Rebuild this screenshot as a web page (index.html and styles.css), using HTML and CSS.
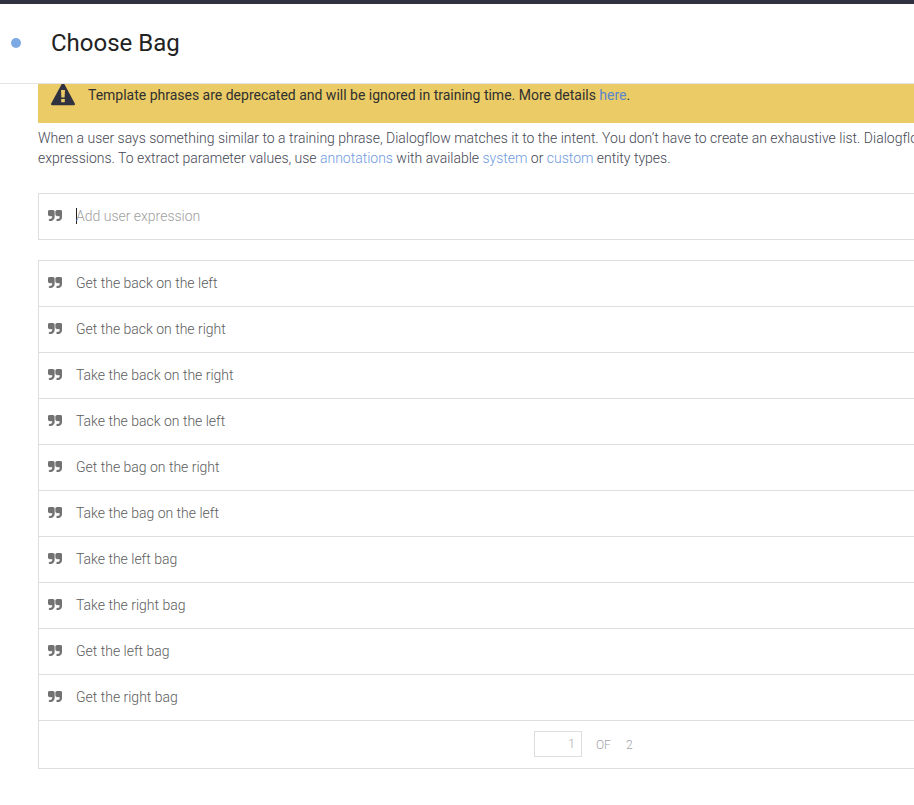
FILE: index.html
```html
<!DOCTYPE html>
<html lang="en">
<head>
<meta charset="utf-8">
<title>Choose Bag</title>
<link rel="stylesheet" href="styles.css">
</head>
<body>
<svg class="defs" aria-hidden="true">
  <symbol id="quote" viewBox="0 128 1664 1408" preserveAspectRatio="none"><path d="M768 320v704q0 104-40.5 198.5t-109.5 163.5-163.5 109.5-198.5 40.5h-64q-26 0-45-19t-19-45v-128q0-26 19-45t45-19h64q106 0 181-75t75-181v-32q0-40-28-68t-68-28h-224q-80 0-136-56t-56-136v-384q0-80 56-136t136-56h384q80 0 136 56t56 136zM1664 320v704q0 104-40.5 198.5t-109.5 163.5-163.5 109.5-198.5 40.5h-64q-26 0-45-19t-19-45v-128q0-26 19-45t45-19h64q106 0 181-75t75-181v-32q0-40-28-68t-68-28h-224q-80 0-136-56t-56-136v-384q0-80 56-136t136-56h384q80 0 136 56t56 136z"/></symbol>
</svg>
<header class="header">
  <span class="dot"></span>
  <h1 class="title">Choose Bag</h1>
</header>
<main class="content">
  <div class="banner">
    <svg class="warning" viewBox="0 0 24 22"><path fill-rule="evenodd" d="M10.7 0h2.6L23.7 19.2Q24.7 21.3 22.5 21.3H1.5Q-.7 21.3.3 19.2ZM10 6l.4 7.5h3.2l.4-7.5ZM10.2 15v3.3h3.6v-3.3Z"/></svg>
    <p class="banner-text">Template phrases are deprecated and will be ignored in training time. More details <a class="link">here</a>.</p>
  </div>
  <p class="intro">When a user says something similar to a training phrase, Dialogflow matches it to the intent. You don’t have to create an exhaustive list. Dialogflow<br>expressions. To extract parameter values, use <a class="link">annotations</a> with available <a class="link">system</a> or <a class="link">custom</a> entity types.</p>
  <div class="box entry row"><svg class="quote"><use href="#quote"/></svg><span class="caret"></span><span class="placeholder">Add user expression</span></div>
  <div class="box">
    <div class="row"><svg class="quote"><use href="#quote"/></svg><span>Get the back on the left</span></div>
    <div class="row"><svg class="quote"><use href="#quote"/></svg><span>Get the back on the right</span></div>
    <div class="row"><svg class="quote"><use href="#quote"/></svg><span>Take the back on the right</span></div>
    <div class="row"><svg class="quote"><use href="#quote"/></svg><span>Take the back on the left</span></div>
    <div class="row"><svg class="quote"><use href="#quote"/></svg><span>Get the bag on the right</span></div>
    <div class="row"><svg class="quote"><use href="#quote"/></svg><span>Take the bag on the left</span></div>
    <div class="row"><svg class="quote"><use href="#quote"/></svg><span>Take the left bag</span></div>
    <div class="row"><svg class="quote"><use href="#quote"/></svg><span>Take the right bag</span></div>
    <div class="row"><svg class="quote"><use href="#quote"/></svg><span>Get the left bag</span></div>
    <div class="row"><svg class="quote"><use href="#quote"/></svg><span>Get the right bag</span></div>
    <div class="pager"><span class="page">1</span><span class="of">OF</span><span class="total">2</span></div>
  </div>
</main>
</body>
</html>
```
FILE: styles.css
```css
* { box-sizing: border-box; }
body {
  margin: 0;
  height: 805px;
  overflow: hidden;
  background: #fff;
  color: #454754;
  font: 300 14px/20px Roboto, sans-serif;
  letter-spacing: -0.007px;
}
.defs { display: none; }
.header {
  display: flex;
  align-items: center;
  height: 84px;
  padding: 0 0 2px 11px;
  border-top: 4px solid #303240;
  border-bottom: 1px solid #e2e3e5;
}
.dot { width: 10px; height: 10px; border-radius: 50%; background: #7eaae4; }
.title { margin: 0 0 0 30px; color: #222; font-size: 24px; line-height: 32px; font-weight: 400; }
.content { padding-left: 38px; }
.banner {
  display: flex;
  align-items: flex-start;
  height: 39px;
  padding-left: 13px;
  background: #ebcb65;
  overflow: hidden;
}
.warning { width: 24px; height: 22px; margin-right: 13px; fill: #303240; }
.banner-text { margin: 1px 0 0; color: #303030; font-weight: 400; }
.link { color: #6f9ae0; }
.banner .link { color: #5b87cd; }
.intro { margin: 5px 0 25px; white-space: nowrap; overflow: hidden; }
.box { border: 1px solid #dedede; border-right: 0; color: #5c5c5c; }
.row { display: flex; align-items: center; height: 46px; padding: 0 0 2px 9px; border-bottom: 1px solid #dedede; }
.row.entry { height: 47px; margin-bottom: 20px; }
.quote { width: 14px; height: 11px; margin-right: 14px; fill: #727272; stroke: #727272; stroke-width: 40px; }
.caret { width: 1px; height: 16px; margin-right: -1px; background: #222; }
.placeholder { color: #a0a0a0; }
.pager { display: flex; align-items: center; height: 47px; padding-left: 495px; color: #9fa3ab; font-size: 12px; }
.page { width: 48px; height: 26px; margin-bottom: 2px; padding-right: 6px; border: 1px solid #dedede; line-height: 24px; text-align: right; }
.of { margin-left: 14px; }
.total { margin-left: 15px; }
```
